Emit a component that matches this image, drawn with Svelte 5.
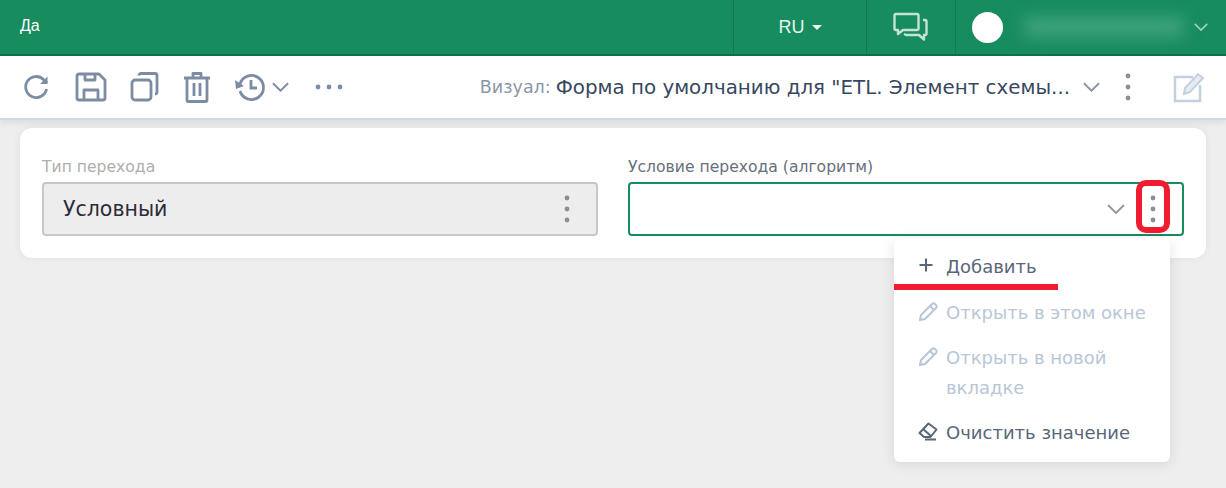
<script>
    const actions = [
        { label: "Добавить", icon: "plus" },
        { label: "Открыть в этом окне", icon: "pen", disabled: true },
        { label: "Открыть в новой вкладке", icon: "pen", disabled: true },
        { label: "Очистить значение", icon: "eraser" },
    ];
</script>

{#snippet dots()}
    <svg class="dots" width="8" height="30" viewBox="0 0 8 30" fill="currentColor">
        <circle cx="4" cy="4" r="2.4" />
        <circle cx="4" cy="15" r="2.4" />
        <circle cx="4" cy="26" r="2.4" />
    </svg>
{/snippet}

{#snippet chevron(width, height)}
    <svg {width} {height} viewBox="0 0 18 10" fill="none" stroke="currentColor" stroke-width="2">
        <path d="M1 1l8 8 8-8" />
    </svg>
{/snippet}

<div class="page">
    <header class="topbar">
        <div class="title">Да</div>
        <div class="cell lang">RU <span class="caret"></span></div>
        <div class="cell chat">
            <svg width="36" height="30" viewBox="0 0 36 30" fill="none" stroke="currentColor" stroke-width="2.4" stroke-linejoin="round">
                <path d="M3 2h21a1.500 1.500 0 0 1 1.500 1.500v13a1.500 1.500 0 0 1-1.500 1.500H10l-5 4v-4H3a1.500 1.500 0 0 1-1.500-1.500v-13A1.500 1.500 0 0 1 3 2z" />
                <path d="M30 8h2a1.500 1.500 0 0 1 1.500 1.500v12a1.500 1.500 0 0 1-1.500 1.500h-1v4.500L26 23H13l-2-1" />
            </svg>
        </div>
        <div class="user">
            <span class="avatar"></span>
            <span class="name"></span>
            <span class="user-arrow">{@render chevron(14, 8)}</span>
        </div>
    </header>

    <div class="toolbar">
        <div class="tools">
            <svg width="30" height="30" viewBox="0 0 30 30" fill="none" stroke="currentColor" stroke-width="2.800">
                <path d="M24.500 17a10.500 10.500 0 1 1-3-9.500L25 11" />
                <path d="M25.500 4.500V12h-7.500" fill="currentColor" stroke="none" />
            </svg>
            <svg width="32" height="30" viewBox="0 0 32 30" fill="none" stroke="currentColor" stroke-width="2.800" stroke-linejoin="round">
                <path d="M4 2h20l6 6v18a2 2 0 0 1-2 2H4a2 2 0 0 1-2-2V4a2 2 0 0 1 2-2z" />
                <path d="M10 2v6h10V2M9 28V18h14v10" />
            </svg>
            <svg width="30" height="32" viewBox="0 0 30 32" fill="none" stroke="currentColor" stroke-width="2.800" stroke-linejoin="round">
                <rect x="2" y="9" width="19" height="20" rx="3" />
                <path d="M9 4.500a2 2 0 0 1 2-2h14a2 2 0 0 1 2 2V21a2 2 0 0 1-2 2" />
            </svg>
            <svg width="28" height="32" viewBox="0 0 28 32" fill="none" stroke="currentColor" stroke-width="2.800" stroke-linejoin="round">
                <path d="M1 7h26M10 7V2.500h8V7M4 7v22a1.500 1.500 0 0 0 1.500 1.500h17A1.500 1.500 0 0 0 24 29V7M11 12v13M17 12v13" />
            </svg>
            <span class="history">
                <svg width="32" height="30" viewBox="0 0 32 30" fill="none" stroke="currentColor" stroke-width="2.800">
                    <path d="M6 12a12 12 0 1 1 0 7" />
                    <path d="M1 8l9 6-8 3z" fill="currentColor" stroke="none" />
                    <path d="M17 8v8h6" />
                </svg>
                {@render chevron(17, 10)}
            </span>
            <svg class="more" width="28" height="6" viewBox="0 0 28 6" fill="currentColor">
                <circle cx="3" cy="3" r="2.400" />
                <circle cx="14" cy="3" r="2.400" />
                <circle cx="25" cy="3" r="2.400" />
            </svg>
        </div>
        <div class="visual">
            <span class="visual-label">Визуал:</span>
            <span class="visual-value">Форма по умолчанию для "ETL. Элемент схемы...</span>
            <span class="visual-arrow">{@render chevron(17, 10)}</span>
            <span class="visual-dots">{@render dots()}</span>
            <svg class="edit" width="32" height="32" viewBox="0 0 32 32" fill="none" stroke="currentColor" stroke-width="2.500">
                <path d="M20 6H2v24h25V14" />
                <path d="M11 23l1-6L25 3l5 4-13 14z" fill="#e6ebf1" stroke-width="2" />
            </svg>
        </div>
    </div>

    <main class="content">
        <section class="card">
            <div class="field">
                <label class="field-label">Тип перехода</label>
                <div class="input readonly">
                    <span class="value">Условный</span>
                    <span class="input-dots">{@render dots()}</span>
                </div>
            </div>
            <div class="field">
                <label class="field-label dark">Условие перехода (алгоритм)</label>
                <div class="input focused">
                    <span class="value"></span>
                    <span class="input-arrow">{@render chevron(18, 10)}</span>
                    <span class="input-dots">{@render dots()}</span>
                    <span class="mark-dots"></span>
                </div>
                <ul class="menu">
                    {#each actions as action}
                        <li class="menu-item" class:disabled={action.disabled}>
                            <span class="menu-icon">
                                {#if action.icon === "plus"}
                                    <svg width="16" height="16" viewBox="0 0 16 16" fill="none" stroke="currentColor" stroke-width="2">
                                        <path d="M8 1.500v13M1.500 8h13" />
                                    </svg>
                                {:else if action.icon === "pen"}
                                    <svg width="20" height="21" viewBox="0 0 20 21" fill="none" stroke="currentColor" stroke-width="2">
                                        <path d="M2 19l1-5L14 3a2 2 0 0 1 3 0l1 1a2 2 0 0 1 0 3L7 18z" />
                                        <path d="M12 5l4 4" />
                                    </svg>
                                {:else}
                                    <svg width="20" height="19" viewBox="0 0 20 19" fill="none" stroke="currentColor" stroke-width="2" stroke-linejoin="round">
                                        <path d="M1.500 11l9-9.500 8 6-6 7.500H6z" />
                                        <path d="M5 7l8 7" />
                                        <path d="M7 17.500h11" />
                                    </svg>
                                {/if}
                            </span>
                            <span class="menu-text">{action.label}</span>
                        </li>
                    {/each}
                    <span class="mark-line"></span>
                </ul>
            </div>
        </section>
    </main>
</div>

<style>
    :global(body) {
        margin: 0;
        background: #eeeeee;
    }

    .page {
        height: 488px;
        overflow: hidden;
        font-family: "DejaVu Sans", Inter, sans-serif;
        background: #eeeeee;
    }

    .topbar {
        display: flex;
        align-items: stretch;
        height: 54px;
        background: #178c5e;
        border-bottom: 2px solid #0f6f4a;
        color: #fff;
    }

    .title {
        flex: 1;
        padding: 0 0 0 20px;
        line-height: 51px;
        font-family: "Liberation Sans", sans-serif;
        font-size: 16px;
    }

    .cell {
        display: flex;
        align-items: center;
        justify-content: center;
        border-left: 1px solid #127a50;
    }

    .lang {
        width: 133px;
        gap: 7px;
        box-sizing: border-box;
        font-family: "Liberation Sans", sans-serif;
        font-size: 18px;
        color: #e8f5ef;
    }

    .caret {
        width: 0;
        height: 0;
        border: 5px solid transparent;
        border-top-color: #e8f5ef;
        border-bottom: 0;
    }

    .chat {
        width: 89px;
        box-sizing: border-box;
        color: #c5e3d5;
    }

    .user {
        display: flex;
        align-items: center;
        width: 271px;
        padding-left: 16px;
        box-sizing: border-box;
        border-left: 1px solid #127a50;
    }

    .avatar {
        width: 31px;
        height: 31px;
        border-radius: 50%;
        background: #fff;
    }

    .name {
        width: 160px;
        height: 20px;
        margin-left: 21px;
        background: #3fa37c;
        filter: blur(8px);
    }

    .user-arrow {
        display: flex;
        margin-left: 10px;
        color: #a6d3c0;
    }

    .toolbar {
        display: flex;
        align-items: center;
        justify-content: space-between;
        height: 64px;
        padding: 0 21px 0 22px;
        background: #fff;
        border-bottom: 2px solid #cfdae5;
        box-sizing: border-box;
        box-shadow: 0 3px 6px rgba(0, 0, 0, 0.08);
    }

    .tools {
        display: flex;
        align-items: center;
        gap: 23px;
        color: #7c8ca3;
    }

    .history {
        display: flex;
        align-items: center;
        gap: 6px;
    }

    .more {
        margin-left: 3px;
    }

    .visual {
        display: flex;
        align-items: center;
    }

    .visual-label {
        font-size: 17.5px;
        color: #8996a8;
    }

    .visual-value {
        margin-left: 5px;
        font-size: 19.850px;
        color: #37475f;
    }

    .visual-arrow {
        display: flex;
        margin-left: 13px;
        color: #8b96a5;
    }

    .visual-dots {
        display: flex;
        margin-left: 24px;
        color: #8e8e8e;
    }

    .edit {
        margin-left: 41px;
        color: #c3d0de;
    }

    .content {
        padding: 8px 20px;
    }

    .card {
        display: grid;
        grid-template-columns: 556px 556px;
        justify-content: space-between;
        height: 130px;
        padding: 28px 22px 0;
        box-sizing: border-box;
        background: #fff;
        border-radius: 12px;
        box-shadow: 0 0 8px rgba(0, 0, 0, 0.06);
    }

    .field {
        position: relative;
    }

    .field-label {
        display: block;
        height: 26px;
        line-height: 22px;
        font-size: 15.600px;
        color: #aeaeae;
    }

    .field-label.dark {
        color: #666f7c;
    }

    .input {
        position: relative;
        display: flex;
        align-items: center;
        height: 54px;
        padding: 0 25px 0 19px;
        box-sizing: border-box;
        border: 2px solid #c8c8c8;
        border-radius: 4px;
    }

    .readonly {
        background: #ededed;
    }

    .focused {
        border-color: #178c5e;
    }

    .value {
        flex: 1;
        font-size: 20.500px;
        color: #2c2c3a;
    }

    .input-dots {
        display: flex;
        color: #8e8e8e;
    }

    .input-arrow {
        display: flex;
        margin-right: 24px;
        color: #9a9a9a;
    }

    .mark-dots {
        position: absolute;
        right: 12px;
        top: -4px;
        width: 34px;
        height: 53px;
        box-sizing: border-box;
        border: 6px solid #f01c2f;
        border-radius: 10px;
    }

    .menu {
        position: absolute;
        left: 266px;
        top: 82px;
        width: 276px;
        height: 224px;
        margin: 0;
        padding: 14px 0 0;
        box-sizing: border-box;
        list-style: none;
        background: #fff;
        border-radius: 6px;
        box-shadow: 0 2px 14px rgba(0, 0, 0, 0.1);
    }

    .menu-item {
        display: flex;
        padding: 0 24px 15px 24px;
        color: #5a6679;
    }

    .menu-item:first-child {
        padding-bottom: 16px;
    }

    .menu-item.disabled {
        color: #b8c6d8;
    }

    .menu-icon {
        display: flex;
        flex: 0 0 28px;
        height: 26px;
        align-items: center;
    }

    .menu-text {
        font-size: 18px;
        line-height: 30px;
    }

    .mark-line {
        position: absolute;
        left: 0;
        top: 46px;
        width: 164px;
        height: 6px;
        background: #f01c2f;
    }
</style>
